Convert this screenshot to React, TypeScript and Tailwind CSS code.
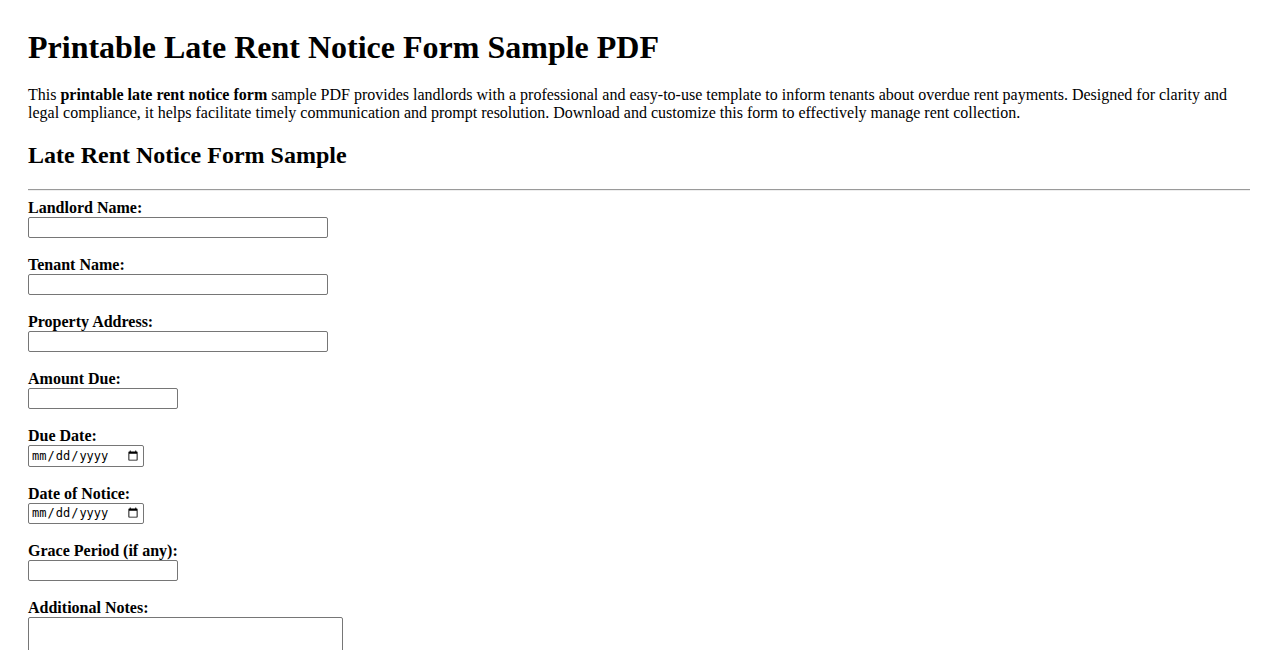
import React from "react";

const inputCls =
  "block border border-[#767676] rounded-[2px] bg-white px-[2px] py-[1px] text-[13.33px] outline-none";

function Field({ label, children, last }: { label: string; children: React.ReactNode; last?: boolean }) {
  return (
    <div className={last ? "" : "mb-[18px]"}>
      <label className="block font-bold text-[16px] leading-[18px]">{label}</label>
      {children}
    </div>
  );
}

export default function App() {
  return (
    <div
      className="bg-white text-black min-h-screen px-[28px] pt-[29px] pb-[20px]"
      style={{ fontFamily: '"Liberation Serif", "Times New Roman", serif' }}
    >
      <h1 className="text-[32px] font-bold leading-[37px] mb-[20px]">
        Printable Late Rent Notice Form Sample PDF
      </h1>
      <p className="text-[16px] leading-[18px] mb-[19px]">
        This <strong className="font-bold">printable late rent notice form</strong> sample PDF provides landlords
        with a professional and easy-to-use template to inform tenants about overdue rent payments. Designed for
        clarity and legal compliance, it helps facilitate timely communication and prompt resolution. Download and
        customize this form to effectively manage rent collection.
      </p>
      <h2 className="text-[24px] font-bold leading-[28px] mb-[20px]">Late Rent Notice Form Sample</h2>
      <hr className="border-0 border-t border-t-[#9a9a9a] border-b border-b-[#eeeeee] mb-[8px]" />
      <form className="flex flex-col">
        <Field label="Landlord Name:">
          <input type="text" className={`${inputCls} w-[300px] h-[21px]`} />
        </Field>
        <Field label="Tenant Name:">
          <input type="text" className={`${inputCls} w-[300px] h-[21px]`} />
        </Field>
        <Field label="Property Address:">
          <input type="text" className={`${inputCls} w-[300px] h-[21px]`} />
        </Field>
        <Field label="Amount Due:">
          <input type="text" className={`${inputCls} w-[150px] h-[21px]`} />
        </Field>
        <Field label="Due Date:">
          <input
            type="date"
            className={`${inputCls} w-[116px] h-[21.5px]`}
            style={{ fontFamily: '"DejaVu Sans Mono", "Liberation Mono", monospace', fontSize: "12px" }}
          />
        </Field>
        <Field label="Date of Notice:">
          <input
            type="date"
            className={`${inputCls} w-[116px] h-[21.5px]`}
            style={{ fontFamily: '"DejaVu Sans Mono", "Liberation Mono", monospace', fontSize: "12px" }}
          />
        </Field>
        <Field label="Grace Period (if any):">
          <input type="text" className={`${inputCls} w-[150px] h-[21px]`} />
        </Field>
        <Field label="Additional Notes:" last>
          <textarea className={`${inputCls} w-[315px] h-[54px] resize-none`} />
        </Field>
      </form>
    </div>
  );
}
